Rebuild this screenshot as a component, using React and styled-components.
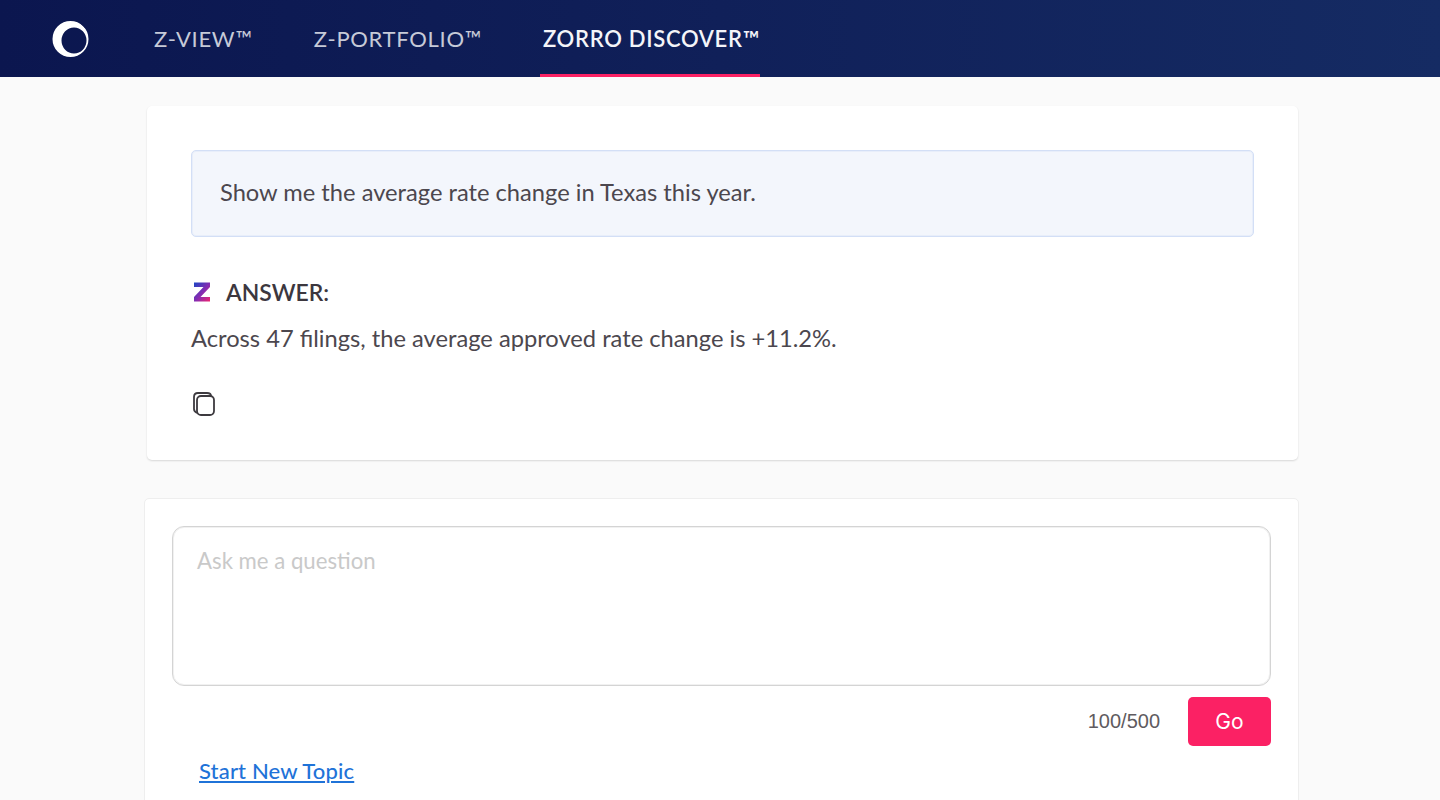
import React from 'react'
import styled, { createGlobalStyle } from 'styled-components'

const GlobalStyle = createGlobalStyle`
  html, body {
    margin: 0;
    height: 800px;
    overflow: hidden;
    background: #fafafa;
    font-family: Lato, "Liberation Sans", sans-serif;
  }
`

const Header = styled.header`
  height: 77px;
  display: flex;
  align-items: stretch;
  padding-left: 52px;
  background: linear-gradient(90deg, #0b164f 0%, #102059 50%, #152b63 100%);
  box-sizing: border-box;
`

const Logo = styled.svg`
  width: 38px;
  height: 38px;
  align-self: center;
  margin-right: 64px;
`

const Nav = styled.nav`
  display: flex;
  gap: 61px;
`

const NavItem = styled.a`
  display: flex;
  align-items: center;
  height: 77px;
  box-sizing: border-box;
  padding-top: 3px;
  font-size: 22px;
  letter-spacing: 0.7px;
  color: ${p => (p.$active ? '#f4f5f9' : '#c6cad8')};
  font-weight: ${p => (p.$active ? 600 : 400)};
  border-bottom: 3px solid ${p => (p.$active ? '#fb2164' : 'transparent')};
  margin-left: ${p => (p.$active ? '-3px' : '0')};
  padding-left: ${p => (p.$active ? '3px' : '0')};
`

const Main = styled.main`
  width: 1154px;
  margin-left: 145px;
  padding-top: 29px;
`

const AnswerCard = styled.section`
  margin: 0 1px 0 2px;
  height: 354px;
  box-sizing: border-box;
  padding: 44px;
  background: #fff;
  border-radius: 5px;
  box-shadow: 0 1px 2px rgba(0, 0, 0, 0.14);
`

const Question = styled.div`
  height: 87px;
  box-sizing: border-box;
  display: flex;
  align-items: center;
  padding: 0 0 3px 28px;
  background: #f3f6fc;
  border: 1px solid #d3dff6;
  box-shadow: inset 0 0 0 1px #e8eefa;
  border-radius: 5px;
  font-size: 23.7px;
  color: #4c474e;
`

const AnswerHead = styled.div`
  display: flex;
  align-items: center;
  gap: 13px;
  margin-top: 42px;
  height: 26px;
  font-weight: 600;
  font-size: 22.9px;
  color: #3c373e;
`

const AnswerText = styled.p`
  margin: 19px 0 0;
  font-size: 23.7px;
  line-height: 28px;
  color: #4c474e;
`

const CopyBtn = styled.svg`
  display: block;
  margin-top: 38px;
  width: 26px;
  height: 28px;
`

const AskCard = styled.section`
  margin-top: 38px;
  margin-left: -1px;
  height: 310px;
  box-sizing: border-box;
  padding: 27px;
  background: #fff;
  border: 1px solid #eee;
  border-radius: 5px;
`

const AskBox = styled.div`
  height: 160px;
  box-sizing: border-box;
  padding: 20px 24px;
  border: 1px solid #d4d4d4;
  box-shadow: inset 0 0 0 1px #f1f1f1;
  border-radius: 12px;
  font-size: 22.2px;
  color: #c9c9c9;
`

const ActionRow = styled.div`
  display: flex;
  justify-content: flex-end;
  align-items: center;
  gap: 28px;
  margin-top: 11px;
`

const Counter = styled.span`
  font-family: "Liberation Sans", sans-serif;
  font-size: 20px;
  color: #5f5b60;
`

const GoButton = styled.button`
  width: 83px;
  height: 49px;
  border: 0;
  border-radius: 5px;
  background: #fb2164;
  color: #fff;
  font-family: Inter, sans-serif;
  font-size: 21px;
`

const NewTopic = styled.a`
  display: inline-block;
  margin: 11px 0 0 27px;
  font-weight: 500;
  font-size: 22px;
  letter-spacing: 0.15px;
  color: #1f73d8;
  text-decoration: underline;
`

const App = () => (
  <>
    <GlobalStyle />
    <Header>
      <Logo viewBox="0 0 38 38">
        <path
          fillRule="evenodd"
          d="M18.500 1a18 18 0 1 0 0 36 18 18 0 0 0 0-36zM22 7.500a12.500 13 0 1 1 0 26a12.500 13 0 0 1 0-26z"
          fill="#fff"
        />
        <path d="M27 1L34 8" stroke="#0b164f" strokeWidth="1.2" />
      </Logo>
      <Nav>
        <NavItem>Z-VIEW™</NavItem>
        <NavItem>Z-PORTFOLIO™</NavItem>
        <NavItem $active>ZORRO DISCOVER™</NavItem>
      </Nav>
    </Header>
    <Main>
      <AnswerCard>
        <Question>Show me the average rate change in Texas this year.</Question>
        <AnswerHead>
          <svg width="22" height="22" viewBox="0 0 22 22">
            <defs>
              <linearGradient id="zGrad" x1="0" y1="0" x2="1" y2="1">
                <stop offset="0" stopColor="#1b46c4" />
                <stop offset="0.55" stopColor="#8a2bb0" />
                <stop offset="1" stopColor="#f0246e" />
              </linearGradient>
            </defs>
            <path d="M3 1.500h16v4.500L9.500 16h9.500v4.500H3V16L12.500 6H3z" fill="url(#zGrad)" />
          </svg>
          ANSWER:
        </AnswerHead>
        <AnswerText>Across 47 filings, the average approved rate change is +11.2%.</AnswerText>
        <CopyBtn viewBox="0 0 26 28" fill="none" stroke="#3d3a3f" strokeWidth="1.8">
          <rect x="6" y="6" width="17" height="19" rx="4" />
          <path d="M6 23c-2-1-3-2-3-4V7c0-3 2-4 4-4h9c2 0 4 1 4 3" />
        </CopyBtn>
      </AnswerCard>
      <AskCard>
        <AskBox>Ask me a question</AskBox>
        <ActionRow>
          <Counter>100/500</Counter>
          <GoButton>Go</GoButton>
        </ActionRow>
        <NewTopic>Start New Topic</NewTopic>
      </AskCard>
    </Main>
  </>
)

export default App
